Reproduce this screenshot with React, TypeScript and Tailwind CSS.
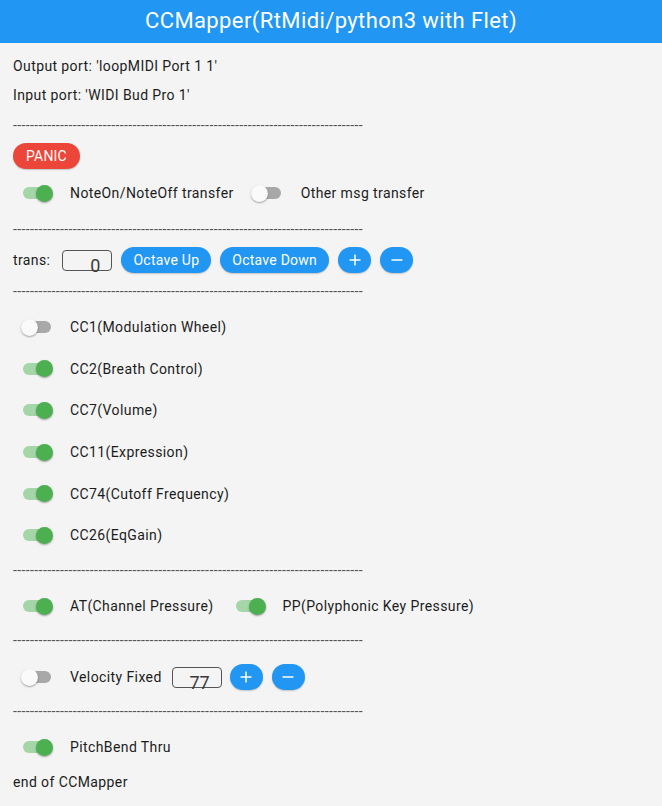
import React from "react";

const FONT = "font-['Roboto','Liberation_Sans',sans-serif]";

function Sw({ on }: { on: boolean }) {
  return (
    <div className="relative w-[32px] h-[18px] flex items-center shrink-0">
      <div
        className={`mx-[2px] w-[28px] h-[12px] rounded-full ${on ? "bg-[#a5d6a7]" : "bg-[#a8a8a8]"}`}
      />
      <div
        className={`absolute top-[0.5px] w-[17px] h-[17px] rounded-full shadow-[0_1px_2px_rgba(0,0,0,0.35)] ${
          on ? "right-0 bg-[#4caf50]" : "left-0 bg-[#fafafa]"
        }`}
      />
    </div>
  );
}

function Divider({ h }: { h: string }) {
  return (
    <div className={`${h} flex items-center pl-[13px]`}>
      <div className="whitespace-nowrap text-[14px] leading-[20px] text-[#555]">
        {"-".repeat(82)}
      </div>
    </div>
  );
}

function PillButton({ children }: { children: React.ReactNode }) {
  return (
    <div className="h-[26px] px-[12px] rounded-full bg-[#2196f3] text-white text-[14px] leading-[20px] tracking-[0.25px] flex items-center shadow-[0_1px_1.5px_rgba(0,0,0,0.2)] shrink-0">
      {children}
    </div>
  );
}

function IconButton({ plus }: { plus: boolean }) {
  return (
    <div className="w-[33px] h-[26px] rounded-full bg-[#2196f3] flex items-center justify-center shadow-[0_1px_1.5px_rgba(0,0,0,0.2)] shrink-0">
      <svg width="12" height="12" viewBox="0 0 12 12">
        <line x1="0.5" y1="6" x2="11.5" y2="6" stroke="white" strokeWidth="1.5" />
        {plus && <line x1="6" y1="0.5" x2="6" y2="11.5" stroke="white" strokeWidth="1.5" />}
      </svg>
    </div>
  );
}

function NumBox({ value }: { value: string }) {
  return (
    <div className="w-[50px] h-[21px] border border-[#555] rounded-[4px] flex items-end justify-end pr-[11px] shrink-0 tracking-normal">
      <span className="text-[18px] leading-[18px] text-[#3a3a3a] mb-[-5px]">{value}</span>
    </div>
  );
}

function SwRow({ h, on, label }: { h: string; on: boolean; label: string }) {
  return (
    <div className={`${h} flex items-center pl-[21px]`}>
      <Sw on={on} />
      <span className="ml-[17px] text-[14px] leading-[20px]">{label}</span>
    </div>
  );
}

export default function App() {
  return (
    <div className={`${FONT} min-h-screen w-full bg-[#f4f4f4] text-[#1c1c1c] tracking-[0.4px]`}>
      <div className="h-[43px] bg-[#2196f3] flex items-center justify-center text-white text-[22px] leading-[28px] pb-[1px]">
        CCMapper(RtMidi/python3 with Flet)
      </div>
      <div className="pt-[9px] flex flex-col">
        <div className="h-[28px] flex items-center pl-[13px] text-[14px] leading-[20px]">
          Output port: 'loopMIDI Port 1 1'
        </div>
        <div className="h-[30px] flex items-center pl-[13px] text-[14px] leading-[20px]">
          Input port: 'WIDI Bud Pro 1'
        </div>
        <Divider h="h-[30px]" />
        <div className="h-[32px] flex items-center pl-[13px]">
          <div className="h-[26px] px-[13px] rounded-full bg-[#eb4639] text-white text-[14px] leading-[20px] flex items-center shadow-[0_1px_1.5px_rgba(0,0,0,0.2)] tracking-[0.2px]">
            PANIC
          </div>
        </div>
        <div className="h-[42px] flex items-center pl-[21px] text-[14px] leading-[20px]">
          <Sw on={true} />
          <span className="ml-[17px]">NoteOn/NoteOff transfer</span>
          <div className="ml-[17px]">
            <Sw on={false} />
          </div>
          <span className="ml-[18px]">Other msg transfer</span>
        </div>
        <Divider h="h-[30px]" />
        <div className="h-[32px] flex items-center pl-[13px] text-[14px] leading-[20px]">
          <span>trans:</span>
          <div className="ml-[12px] flex items-center gap-[9px]">
            <NumBox value="0" />
            <PillButton>Octave Up</PillButton>
            <PillButton>Octave Down</PillButton>
            <IconButton plus={true} />
            <IconButton plus={false} />
          </div>
        </div>
        <Divider h="h-[30px]" />
        <SwRow h="h-[42px]" on={false} label="CC1(Modulation Wheel)" />
        <SwRow h="h-[41px]" on={true} label="CC2(Breath Control)" />
        <SwRow h="h-[42px]" on={true} label="CC7(Volume)" />
        <SwRow h="h-[42px]" on={true} label="CC11(Expression)" />
        <SwRow h="h-[41px]" on={true} label="CC74(Cutoff Frequency)" />
        <SwRow h="h-[42px]" on={true} label="CC26(EqGain)" />
        <Divider h="h-[28px]" />
        <div className="h-[44px] flex items-center pl-[21px] text-[14px] leading-[20px]">
          <Sw on={true} />
          <span className="ml-[17px]">AT(Channel Pressure)</span>
          <div className="ml-[20px]">
            <Sw on={true} />
          </div>
          <span className="ml-[17px]">PP(Polyphonic Key Pressure)</span>
        </div>
        <Divider h="h-[24px]" />
        <div className="h-[50px] flex items-center pl-[21px] text-[14px] leading-[20px]">
          <Sw on={false} />
          <span className="ml-[17px]">Velocity Fixed</span>
          <div className="ml-[10px] flex items-center">
            <NumBox value="77" />
            <div className="ml-[8px]">
              <IconButton plus={true} />
            </div>
            <div className="ml-[9px]">
              <IconButton plus={false} />
            </div>
          </div>
        </div>
        <Divider h="h-[18px]" />
        <SwRow h="h-[54px]" on={true} label="PitchBend Thru" />
        <div className="h-[16px] flex items-center pl-[13px] text-[14px] leading-[20px]">
          end of CCMapper
        </div>
      </div>
    </div>
  );
}
